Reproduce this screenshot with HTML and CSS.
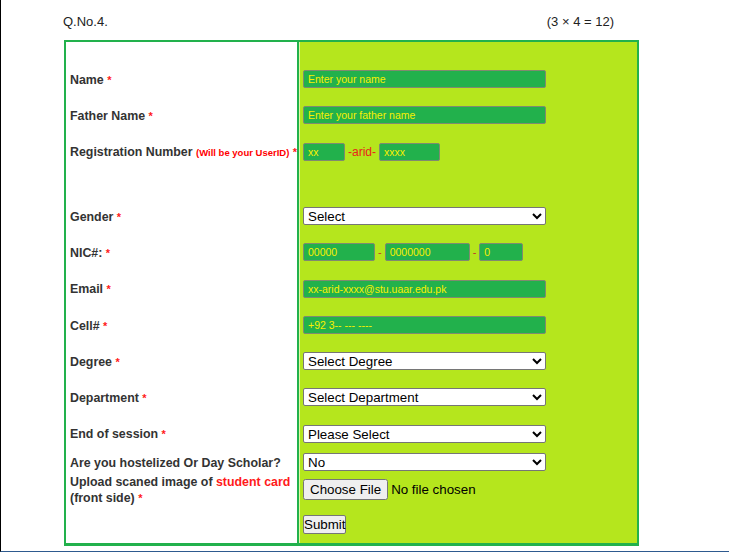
FILE: index.html
```html
<!DOCTYPE html>
<html lang="en">
<head>
<meta charset="utf-8">
<title>Q.No.4</title>
<link rel="stylesheet" href="styles.css">
</head>
<body>
<div class="page">
  <header class="qhead">
    <span>Q.No.4.</span>
    <span>(3 × 4 = 12)</span>
  </header>
  <form class="form">
    <div class="lbl"></div><div class="fld"></div>

    <div class="lbl"><span>Name <span class="req">*</span></span></div>
    <div class="fld"><input class="txt full" type="text" placeholder="Enter your name"></div>

    <div class="lbl"><span>Father Name <span class="req">*</span></span></div>
    <div class="fld"><input class="txt full" type="text" placeholder="Enter your father name"></div>

    <div class="lbl nowrap"><span>Registration Number <span class="note">(Will be your UserID)</span> <span class="req">*</span></span></div>
    <div class="fld gap3"><input class="txt w42" type="text" placeholder="xx"><span class="arid">-arid-</span><input class="txt w61" type="text" placeholder="xxxx"></div>

    <div class="lbl"></div><div class="fld"></div>

    <div class="lbl"><span>Gender <span class="req">*</span></span></div>
    <div class="fld"><select class="sel"><option>Select</option><option>Male</option><option>Female</option></select></div>

    <div class="lbl"><span>NIC#: <span class="req">*</span></span></div>
    <div class="fld gap3"><input class="txt w72" type="text" placeholder="00000"><span class="dash">-</span><input class="txt w85" type="text" placeholder="0000000"><span class="dash">-</span><input class="txt w44" type="text" placeholder="0"></div>

    <div class="lbl"><span>Email <span class="req">*</span></span></div>
    <div class="fld"><input class="txt full" type="text" placeholder="xx-arid-xxxx@stu.uaar.edu.pk"></div>

    <div class="lbl"><span>Cell# <span class="req">*</span></span></div>
    <div class="fld"><input class="txt full" type="text" placeholder="+92 3-- --- ----"></div>

    <div class="lbl"><span>Degree <span class="req">*</span></span></div>
    <div class="fld"><select class="sel"><option>Select Degree</option></select></div>

    <div class="lbl"><span>Department <span class="req">*</span></span></div>
    <div class="fld"><select class="sel"><option>Select Department</option></select></div>

    <div class="lbl"><span>End of session <span class="req">*</span></span></div>
    <div class="fld"><select class="sel"><option>Please Select</option></select></div>

    <div class="lbl"><span>Are you hostelized Or Day Scholar?</span></div>
    <div class="fld"><select class="sel"><option>No</option><option>Yes</option></select></div>

    <div class="lbl"><span>Upload scaned image of <span class="red">student card</span><br>(front side) <span class="req">*</span></span></div>
    <div class="fld"><input class="file" type="file"></div>

    <div class="lbl"></div>
    <div class="fld"><button class="btn" type="button">Submit</button></div>
  </form>
</div>
</body>
</html>
```

FILE: styles.css
```css
html, body {
  margin: 0;
  padding: 0;
  background: #ffffff;
}

.page {
  height: 551px;
  border-left: 1px solid #000000;
  border-bottom: 1px solid #2e5a8f;
  font-family: "Liberation Sans", Arial, sans-serif;
}

.qhead {
  box-sizing: border-box;
  height: 40px;
  width: 551px;
  margin-left: 62px;
  padding-top: 14px;
  display: flex;
  justify-content: space-between;
  font-size: 13px;
  line-height: 15px;
  color: #222222;
}

.form {
  box-sizing: border-box;
  width: 575px;
  margin: 0 0 0 63px;
  border: 2px solid #22b14c;
  border-bottom-width: 3px;
  display: grid;
  grid-template-columns: 231px 1fr;
  grid-template-rows: 19px 36px 36px 37px 28px 36px 36px 37px 36px 36px 36px 37px 20px 34px 37px;
}

.lbl {
  background: #ffffff;
  padding: 1px 0 0 4px;
  display: flex;
  align-items: center;
  font-size: 12.4px;
  font-weight: bold;
  color: #333333;
  line-height: 16px;
}

.lbl .req {
  color: #ff1a1a;
  font-size: 11px;
}

.nowrap {
  white-space: nowrap;
}

.note {
  color: #ff0000;
  font-size: 9.5px;
}

.red {
  color: #ff1a1a;
}

.fld {
  background: #b5e61d;
  border-left: 2px solid #22b14c;
  box-shadow: inset 1px 0 0 #e4f4a8;
  padding-left: 4px;
  display: flex;
  align-items: center;
}

.gap3 {
  gap: 3px;
}

.txt {
  box-sizing: border-box;
  height: 18px;
  margin: 0;
  padding: 0 4px;
  border: 1px solid #7f8a70;
  border-radius: 2px;
  background: #22b14c;
  color: #fff200;
  font-family: "Liberation Sans", Arial, sans-serif;
  font-size: 10.5px;
}

.txt::placeholder {
  color: #f7f000;
  opacity: 1;
}

.full { width: 243px; }
.w42 { width: 42px; }
.w61 { width: 61px; }
.w72 { width: 72px; }
.w85 { width: 85px; }
.w44 { width: 44px; }

.arid {
  color: #e8231b;
  font-size: 12px;
}

.dash {
  color: #c0392b;
  font-size: 11px;
}

.sel {
  box-sizing: border-box;
  width: 243px;
  height: 18px;
  margin: 0;
  padding: 0;
  border: 1px solid #767676;
  border-radius: 2px;
  background: #ffffff;
  color: #000000;
  font-family: "Liberation Sans", Arial, sans-serif;
  font-size: 13.33px;
}

.file {
  margin: 0;
  font-family: "Liberation Sans", Arial, sans-serif;
  font-size: 13.33px;
  color: #000000;
}

.file::file-selector-button {
  font-family: "Liberation Sans", Arial, sans-serif;
  font-size: 13.33px;
  height: 21px;
  padding: 1px 5px;
  margin-right: 3px;
}

.btn {
  box-sizing: border-box;
  height: 19px;
  margin: 0;
  padding: 0;
  font-family: "Liberation Sans", Arial, sans-serif;
  font-size: 13.33px;
  color: #000000;
  border: 1px solid #767676;
  border-radius: 2px;
  background: #efefef;
}
```
